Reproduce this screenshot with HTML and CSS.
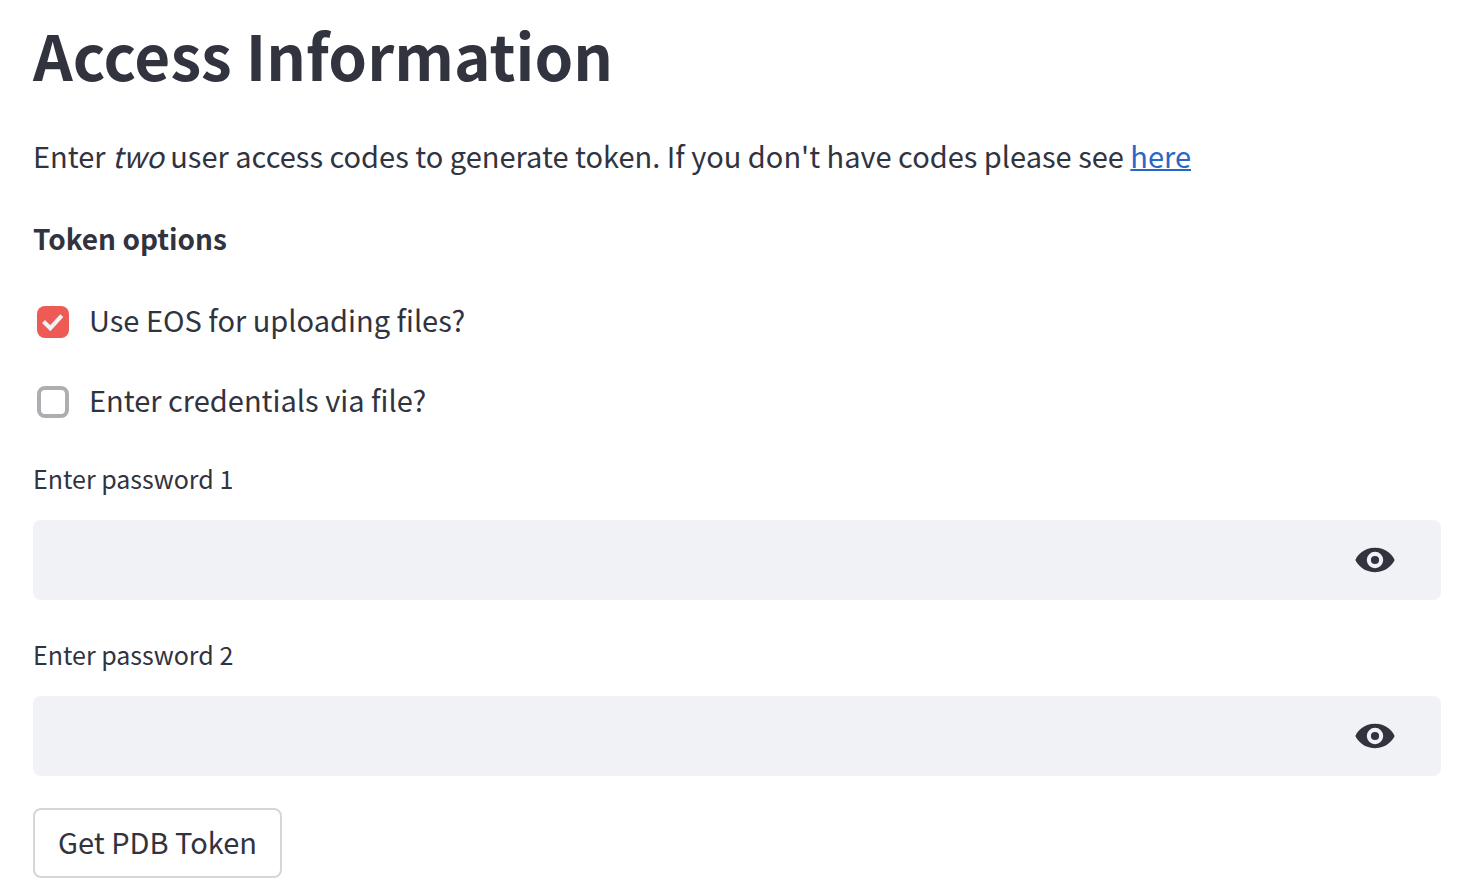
FILE: index.html
```html
<!DOCTYPE html>
<html lang="en">
<head>
<meta charset="utf-8">
<title>Access Information</title>
<link rel="stylesheet" href="styles.css">
</head>
<body>
<main class="page">
  <h1 class="title">Access Information</h1>
  <p class="intro">Enter <em>two</em> user access codes to generate token. If you don't have codes please see <a class="link" href="#codes">here</a></p>
  <h2 class="subtitle">Token options</h2>
  <form class="form">
    <label class="option"><input class="check" type="checkbox" checked><span class="option-text">Use EOS for uploading files?</span></label>
    <label class="option"><input class="check" type="checkbox"><span class="option-text">Enter credentials via file?</span></label>
    <div class="field">
      <label class="field-label" for="pw1">Enter password 1</label>
      <div class="field-box">
        <input class="field-input" id="pw1" type="password">
        <button class="reveal" type="button" aria-label="Show password 1">
          <svg class="eye" viewBox="0 0 40 26"><path fill="#31333f" fill-rule="evenodd" d="M20 .8C8.500 .8 2 9 .4 13 2 17 8.500 25.200 20 25.200S38 17 39.600 13C38 9 31.500 .8 20 .8zM20 21.200a8.200 8.200 0 1 1 0-16.400 8.200 8.200 0 0 1 0 16.400zM20 8.900a4.100 4.100 0 1 0 0 8.200 4.100 4.100 0 0 0 0-8.200z"/></svg>
        </button>
      </div>
    </div>
    <div class="field">
      <label class="field-label" for="pw2">Enter password 2</label>
      <div class="field-box">
        <input class="field-input" id="pw2" type="password">
        <button class="reveal" type="button" aria-label="Show password 2">
          <svg class="eye" viewBox="0 0 40 26"><path fill="#31333f" fill-rule="evenodd" d="M20 .8C8.500 .8 2 9 .4 13 2 17 8.500 25.200 20 25.200S38 17 39.600 13C38 9 31.500 .8 20 .8zM20 21.200a8.200 8.200 0 1 1 0-16.400 8.200 8.200 0 0 1 0 16.400zM20 8.900a4.100 4.100 0 1 0 0 8.200 4.100 4.100 0 0 0 0-8.200z"/></svg>
        </button>
      </div>
    </div>
    <button class="submit" type="button">Get PDB Token</button>
  </form>
</main>
</body>
</html>
```
FILE: styles.css
```css
* { box-sizing: border-box; }
body {
  margin: 0;
  background: #fff;
  color: #31333f;
  font-family: "Noto Sans CJK SC", "Noto Sans", sans-serif;
  font-size: 29px;
  line-height: 50px;
}
.page { padding: 12px 29px 16px 33px; }
.title { margin: 0; font-size: 62px; line-height: 84px; font-weight: 700; }
.intro { margin: 34px 0 33px; }
.link { color: #2a66c8; text-decoration-thickness: 2px; }
.subtitle { margin: 0 0 34px; font-size: 28px; line-height: 50px; font-weight: 700; }
.form { display: flex; flex-direction: column; align-items: stretch; }
.option { display: flex; align-items: center; gap: 20px; margin: 0 0 30px; padding-left: 4px; }
.option-text { padding-bottom: 6px; line-height: 44px; }
.check {
  appearance: none;
  width: 32px;
  height: 32px;
  margin: 0;
  border: 4px solid #adaeb2;
  border-radius: 8px;
  background: #fff;
}
.check:checked {
  border-color: transparent;
  background: #ee5a54 url("data:image/svg+xml,%3Csvg xmlns='http://www.w3.org/2000/svg' viewBox='0 0 32 32'%3E%3Cpath d='M6.500 15.500l6.800 6.700L24.800 9.700' fill='none' stroke='%23f0f2f6' stroke-width='4.200'/%3E%3C/svg%3E") border-box center / 32px no-repeat;
}
.field { margin-bottom: 32px; }
.field-label { display: block; padding-bottom: 20px; font-size: 25px; line-height: 44px; }
.field-label { margin-top: -1px; }
.field + .field { margin-top: 1px; }
.field-box { display: flex; height: 80px; background: #f0f2f6; border-radius: 8px; }
.field-input { flex: 1; min-width: 0; border: 0; padding: 0 24px; background: transparent; font: inherit; color: inherit; }
.reveal { display: flex; align-items: center; justify-content: center; width: 132px; border: 0; padding: 0; background: transparent; }
.eye { width: 40px; height: 26px; }
.submit {
  align-self: flex-start;
  height: 70px;
  padding: 0 23px 4px;
  border: 2px solid #d6d6d9;
  border-radius: 8px;
  background: #fff;
  color: inherit;
  font: inherit;
}
```
